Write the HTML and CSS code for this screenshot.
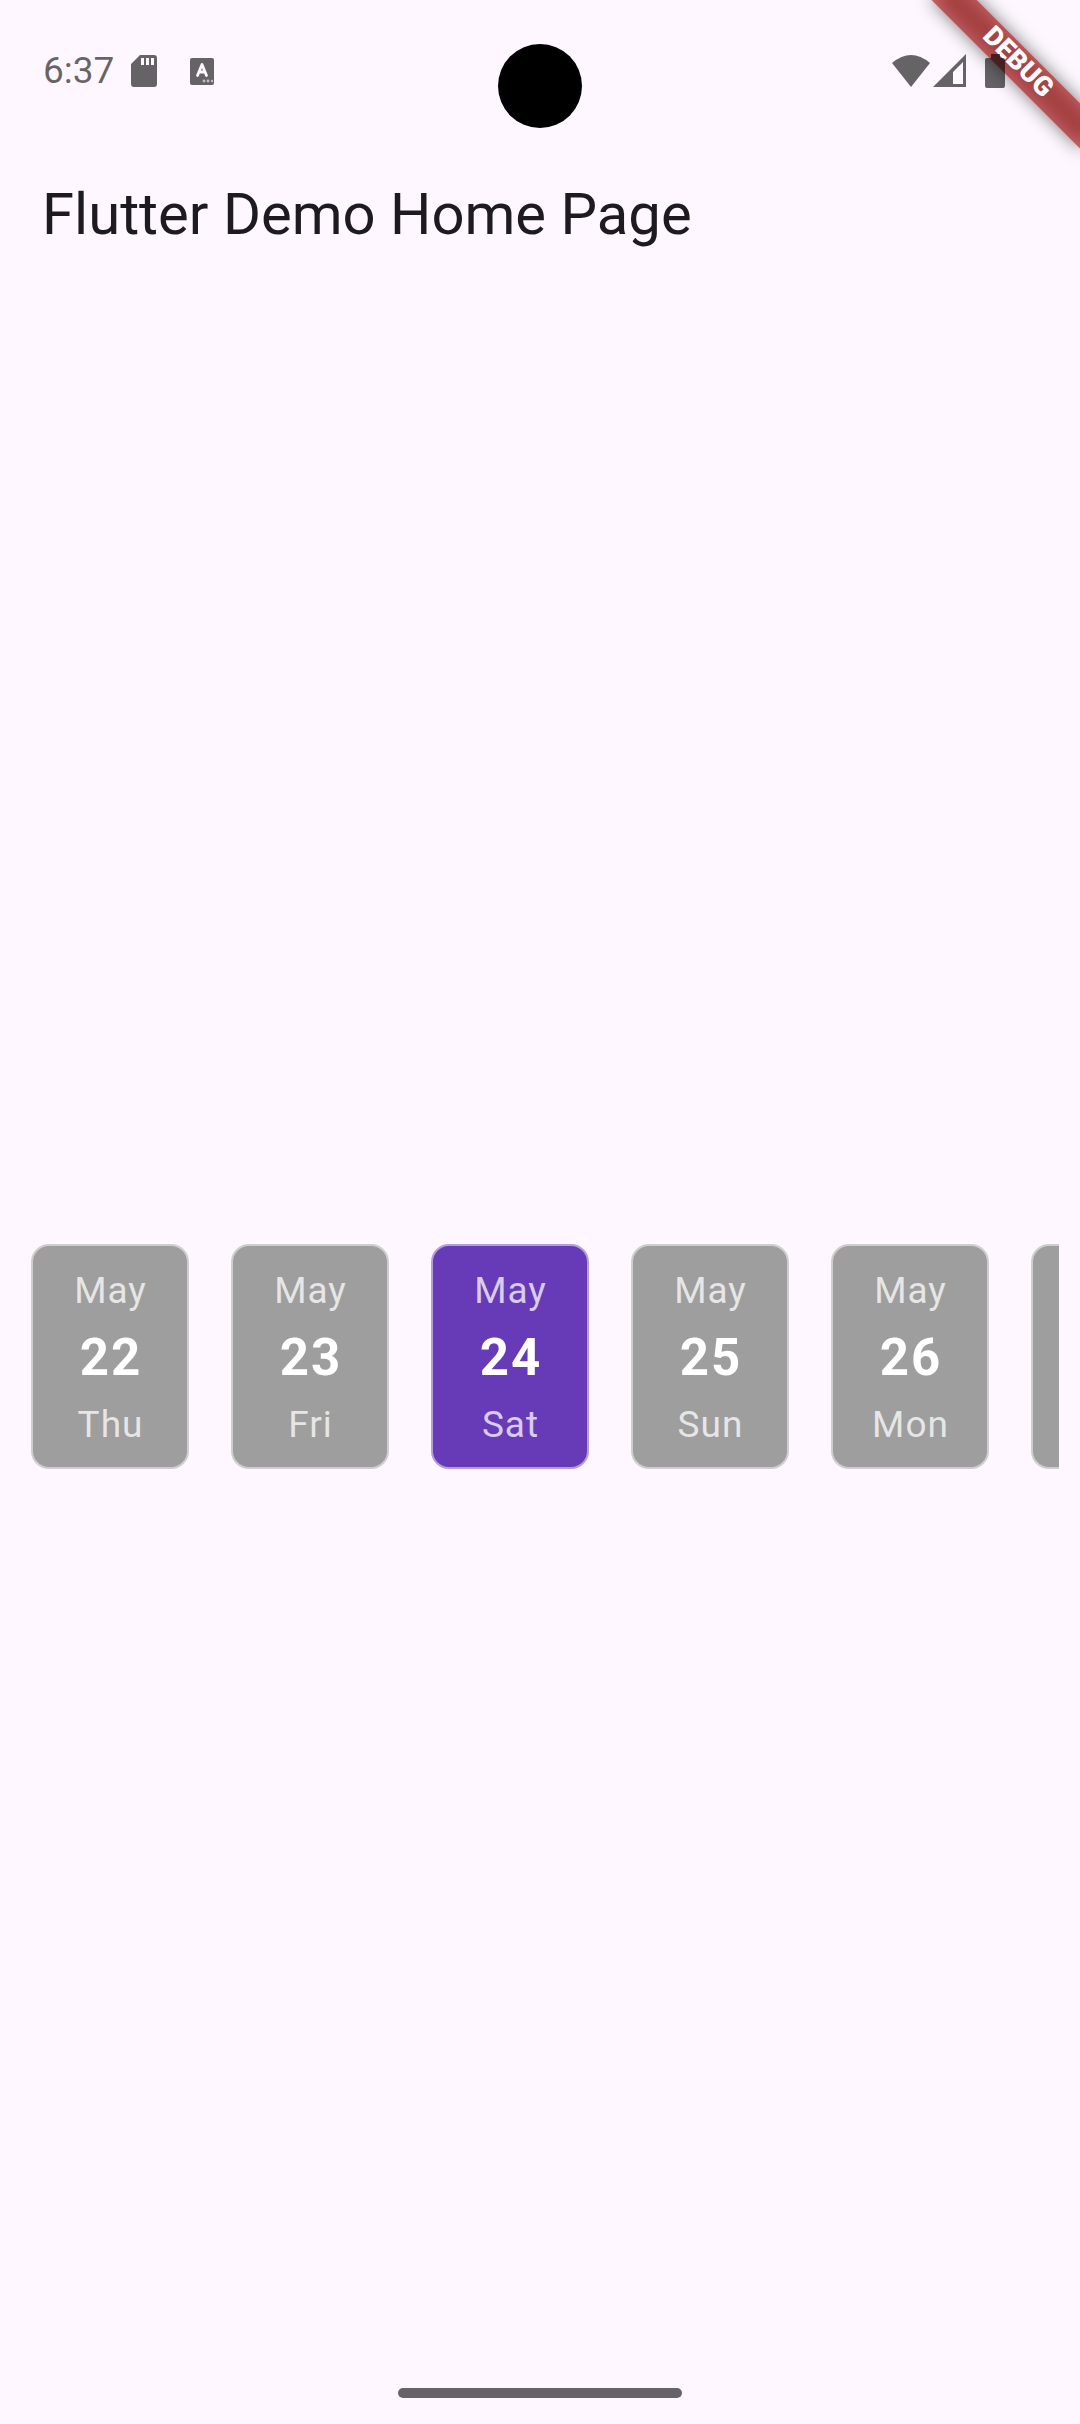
FILE: index.html
```html
<!DOCTYPE html>
<html lang="en">
<head>
<meta charset="utf-8">
<meta name="viewport" content="width=device-width, initial-scale=1">
<title>Flutter Demo Home Page</title>
<link rel="stylesheet" href="styles.css">
</head>
<body>
<div class="screen">
  <div class="debug-banner"><span class="debug-label">DEBUG</span></div>
  <div class="status-bar">
    <div class="status-left">
      <time class="clock">6:37</time>
      <svg class="icon-sd" viewBox="0 0 26 32" width="26" height="32" aria-hidden="true"><path fill-rule="evenodd" d="M9 0H23Q26 0 26 3V29Q26 32 23 32H3Q0 32 0 29V9ZM10 3V10H13V3ZM15 3V10H18V3ZM20 3V10H23V3Z"/></svg>
      <svg class="icon-app" viewBox="0 0 24 28" width="24" height="28" aria-hidden="true"><defs><mask id="cut"><rect width="24" height="28" fill="#fff"/><path d="M7.500 18.500L12 7.500L16.500 18.500M9 15H15" fill="none" stroke="#000" stroke-width="2.800" stroke-linecap="round" stroke-linejoin="round"/><circle cx="14" cy="24" r="1.400"/><circle cx="18" cy="24" r="1.400"/><circle cx="22" cy="24" r="1.200"/></mask></defs><rect y="1" width="24" height="27" rx="2" mask="url(#cut)"/></svg>
    </div>
    <div class="status-right">
      <svg viewBox="0 0 40 34" width="40" height="34" aria-hidden="true"><path d="M1 9Q20 -7 39 9L20 33Z"/></svg>
      <svg viewBox="0 0 34 34" width="34" height="34" aria-hidden="true"><path fill-rule="evenodd" d="M33 0V33H0ZM30 8L20 18V30H30Z"/></svg>
      <svg class="icon-battery" viewBox="0 0 20 34" width="20" height="34" aria-hidden="true"><path d="M6 0H15V4H18Q20 4 20 6V32Q20 34 18 34H2Q0 34 0 32V6Q0 4 2 4H6Z"/></svg>
    </div>
  </div>
  <div class="camera"></div>
  <header class="app-bar"><h1 class="title">Flutter Demo Home Page</h1></header>
  <main class="content">
    <div class="dates">
      <button class="day" type="button"><span class="label">May</span><span class="number">22</span><span class="label">Thu</span></button>
      <button class="day" type="button"><span class="label">May</span><span class="number">23</span><span class="label">Fri</span></button>
      <button class="day selected" type="button" aria-pressed="true"><span class="label">May</span><span class="number">24</span><span class="label">Sat</span></button>
      <button class="day" type="button"><span class="label">May</span><span class="number">25</span><span class="label">Sun</span></button>
      <button class="day" type="button"><span class="label">May</span><span class="number">26</span><span class="label">Mon</span></button>
      <button class="day" type="button" aria-label="Next day"></button>
    </div>
  </main>
  <div class="handle"></div>
</div>
</body>
</html>
```
FILE: styles.css
```css
* { box-sizing: border-box; }

body {
  margin: 0;
  background: #fef7ff;
  font-family: Roboto, sans-serif;
}

.screen {
  position: relative;
  display: flex;
  flex-direction: column;
  min-height: 100vh;
  overflow: hidden;
}

.status-bar {
  position: relative;
  display: flex;
  justify-content: space-between;
  align-items: center;
  height: 142px;
  padding: 0 75px 0 43px;
  color: rgba(0, 0, 0, 0.6);
}

.status-bar svg { fill: currentColor; display: block; }

.status-left,
.status-right {
  display: flex;
  align-items: center;
}

.clock {
  font-size: 37px;
  line-height: 44px;
}

.icon-sd { margin-left: 17px; }
.icon-app { margin-left: 33px; }

.status-right { gap: 2px; }
.icon-battery { margin-left: 16px; }

.camera {
  position: absolute;
  top: 44px;
  left: 50%;
  width: 84px;
  height: 84px;
  border-radius: 50%;
  background: #000;
  transform: translateX(-50%);
}

/* Corner ribbon, turned about the top right corner of the screen */
.debug-banner {
  position: absolute;
  top: 73px;
  right: -105px;
  width: 210px;
  height: 32px;
  transform-origin: 105px -73px;
  transform: rotate(45deg);
  text-align: center;
  font-size: 27px;
  line-height: 28px;
}

.debug-banner::before,
.debug-banner::after {
  content: "";
  position: absolute;
  inset: 0;
}

.debug-banner::before {
  background: rgba(0, 0, 0, 0.5);
  filter: blur(9px);
}

.debug-banner::after { background: rgba(183, 28, 28, 0.63); }

.debug-label {
  position: relative;
  z-index: 1;
  color: #fff;
  font-weight: 900;
}

.app-bar {
  display: flex;
  align-items: center;
  height: 146px;
  padding: 0 42px 2px;
}

.title {
  margin: 0;
  color: #1d1b20;
  font-size: 58px;
  font-weight: 400;
  line-height: 74px;
}

.content {
  flex: 1;
  display: flex;
  align-items: center;
  padding: 0 21px;
}

.dates {
  flex: 1;
  display: flex;
  gap: 42px;
  padding-left: 10px;
  overflow: hidden;
}

.day {
  flex: none;
  display: flex;
  flex-direction: column;
  align-items: center;
  justify-content: space-between;
  width: 158px;
  height: 225px;
  padding: 22px 0 19px;
  border: 2px solid #cecece;
  border-radius: 18px;
  background: #9e9e9e;
  font-family: inherit;
}

.day.selected {
  border-color: #b39ddb;
  background: #673ab7;
}

.label {
  padding-left: 1px;
  color: rgba(255, 255, 255, 0.75);
  font-size: 37px;
  line-height: 46px;
  letter-spacing: 1px;
}

.number {
  padding-left: 2px;
  color: #fff;
  font-size: 51px;
  font-weight: 700;
  line-height: 66px;
  letter-spacing: 2px;
}

/* Gesture handle, floating over the page content */
.handle {
  position: absolute;
  bottom: 26px;
  left: 50%;
  width: 284px;
  height: 10px;
  border-radius: 5px;
  background: #666368;
  transform: translateX(-50%);
}
```
